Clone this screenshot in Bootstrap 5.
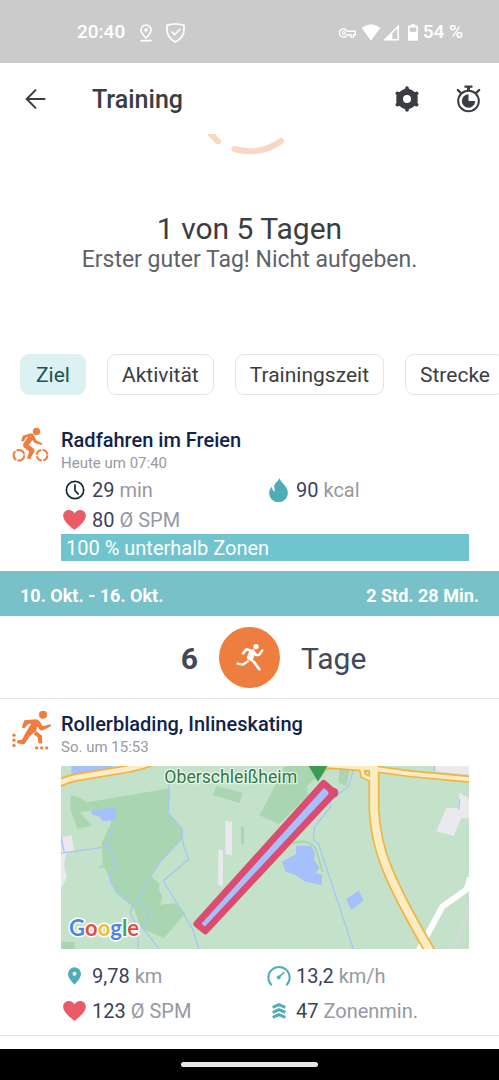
<!DOCTYPE html>
<html lang="de">
<head>
<meta charset="utf-8">
<meta name="viewport" content="width=device-width, initial-scale=1">
<title>Training</title>
<link href="https://cdn.jsdelivr.net/npm/bootstrap@5.3.0/dist/css/bootstrap.min.css" rel="stylesheet">
<style>
  body { font-family: Roboto, "Liberation Sans", sans-serif; color: #3a3d42; background: #fff; }
  svg { display: block; flex: none; }
  .status-bar { background: #cbcbcb; color: #fff; height: 63px; padding: 2px 36px 0 77px; font-size: 19px; font-weight: 500; }
  .status-bar .pin { margin-left: 14px; }
  .status-bar .shield { margin-left: 13px; }
  .status-bar .wifi { margin: 0 2px 0 5px; }
  .status-bar .battery { margin: 0 5px 0 9px; }
  .app-bar { height: 71px; padding: 0 18px 0 25px; }
  .app-bar h1 { font-size: 25px; font-weight: 500; line-height: 30px; margin-left: 45px; padding-top: 3px; }
  .icon-btn { background: none; border: 0; padding: 0; color: #3a3e43; }
  .icon-btn + .icon-btn { margin-left: 36px; }
  .goal-title { font-size: 30px; line-height: 36px; font-weight: 400; margin-top: 56px; }
  .goal-text { font-size: 23px; line-height: 26px; color: #5f6268; }
  .chips { gap: 21px; margin-top: 81px; padding-left: 20px; overflow: hidden; }
  .chip { flex: none; height: 41px; padding: 0 14px; font-size: 21px; line-height: 24px; color: #3a3d42; background: #fff; border: 1px solid #e4e4e4; border-radius: 9px; }
  .chip.active { background: #dcf1f2; border-color: #dcf1f2; color: #1d5358; padding: 0 15px; }
  .workout { padding: 12px 30px 0 0; }
  .chips + .workout { padding-top: 32px; }
  .workout-icon { width: 61px; padding-left: 12px; flex: none; }
  .workout h2 { font-size: 20px; line-height: 26px; font-weight: 500; color: #10234b; }
  .workout time { display: block; font-size: 15px; line-height: 21px; color: #989aa0; }
  .metric { font-size: 20px; color: #3a4358; padding-top: 2px; }
  .metric .unit { color: #96999f; }
  .glyph { width: 27px; margin-right: 4px; flex: none; display: flex; justify-content: center; }
  .tight .metric { height: 30px; }
  .loose .metric { height: 35px; }
  .zone { background: #6fc4cd; color: #fff; font-size: 20px; line-height: 27px; padding: 1px 5px 0; height: 27px; }
  .week { background: #79c1c9; color: #fff; height: 45px; margin-top: 10px; padding: 3px 20px 0; font-size: 18px; font-weight: 700; }
  .days { height: 83px; gap: 21px; font-size: 30px; color: #40495b; border-bottom: 1px solid #e4e4e4; }
  .days > span { flex: 1 1 0; padding-top: 2px; }
  .disc { width: 61px; height: 61px; border-radius: 50%; background: #ee7d40; }
  .map { width: 100%; margin-top: 8px; }
  .rule { border-bottom: 1px solid #e2e2e2; }
  .nav-strip { background: #000; height: 31px; }
  .home-pill { width: 137px; height: 5px; border-radius: 3px; background: #eae6e8; }
</style>
</head>
<body>
<svg width="0" height="0" class="position-absolute" aria-hidden="true">
  <symbol id="heart" viewBox="0 0 68 60"><path fill="#e95b66" d="M34 60C24 51 0 34 0 17 0 7 8 0 17 0c8 0 13 4 17 10C38 4 43 0 51 0c9 0 17 7 17 17 0 17-24 34-34 43z"/></symbol>
</svg>
<div class="d-flex flex-column min-vh-100 overflow-hidden">
  <div class="status-bar d-flex align-items-center">
    <span>20:40</span>
    <svg class="pin" width="14" height="18" viewBox="0 0 40 54" fill="none" stroke="#fff" stroke-width="5"><path d="M20 42C10 32 5 26 5 18a15 15 0 0 1 30 0c0 8-5 14-15 24z"/><circle cx="20" cy="18" r="3"/><path d="M3 50h34"/></svg>
    <svg class="shield" width="19" height="20" viewBox="0 0 57 60" fill="none" stroke="#fff" stroke-width="5"><path d="M3 7q25-8 51 0v14c0 16-10 28-26 36C13 49 3 37 3 21z"/><path d="M17 26l9 9 17-17"/></svg>
    <svg class="ms-auto" width="17" height="12" viewBox="0 0 50 34" fill="none" stroke="#fff" stroke-width="4"><path d="M24 12h24v10h-5v7h-8v-7H24A12 12 0 1 1 24 12z"/><circle cx="14" cy="17" r="4"/></svg>
    <svg class="wifi" width="20" height="17" viewBox="0 0 60 50" fill="#fff"><path d="M2 11q28-22 56 0L30 50z"/></svg>
    <svg width="16" height="17" viewBox="0 0 50 50"><path d="M50 0v50H0z" fill="#fff"/><path d="M45 12v33H29V28z" fill="#cbcbcb"/></svg>
    <svg class="battery" width="10" height="17" viewBox="0 0 30 50"><path d="M9 0h12v4h6q3 0 3 3v40q0 3-3 3H3q-3 0-3-3V7q0-3 3-3h6z" fill="#fff"/><path d="M5 10h20v13H5z" fill="#cbcbcb"/></svg>
    <span>54 %</span>
  </div>

  <header class="app-bar d-flex align-items-center">
    <button class="icon-btn" aria-label="Zurück"><svg width="22" height="22" viewBox="0 0 66 66" fill="none" stroke="currentColor" stroke-width="6"><path d="M61 33H6M33 5L5 33l28 28"/></svg></button>
    <h1 class="mb-0 me-auto">Training</h1>
    <button class="icon-btn" aria-label="Einstellungen"><svg width="26" height="26" viewBox="0 0 78 78"><path d="M39 6l14 6 16 11 2 9v14l-2 9-16 11-14 6-14-6L9 55l-2-9V32l2-9 16-11z" fill="currentColor"/><path d="M39 6v66M10 22l58 34M68 22L10 56" stroke="currentColor" stroke-width="11" stroke-linecap="round"/><circle cx="39" cy="39" r="12" fill="#fff"/></svg></button>
    <button class="icon-btn" aria-label="Stoppuhr"><svg width="25" height="28" viewBox="0 0 74 84" fill="none" stroke="currentColor"><circle cx="37" cy="48" r="31" stroke-width="6"/><path d="M37 3v12" stroke-width="9"/><path d="M28 5h18" stroke-width="7" stroke-linecap="round"/><path d="M5 15l8 8M69 15l-8 8" stroke-width="7" stroke-linecap="round"/><path d="M37 28v20h20A20 20 0 1 1 37 28z" fill="currentColor" stroke="none"/></svg></button>
  </header>

  <main>
    <section class="text-center">
      <svg class="mx-auto" width="84" height="21" viewBox="0 0 252 63" fill="none" stroke="#f9d7c4" stroke-width="18" stroke-linecap="round"><path d="M-4-12L30 22M79 45Q158 66 219 21"/></svg>
      <h2 class="goal-title mb-0">1 von 5 Tagen</h2>
      <p class="goal-text mb-0">Erster guter Tag! Nicht aufgeben.</p>
    </section>

    <div class="chips d-flex">
      <button class="chip active">Ziel</button>
      <button class="chip">Aktivität</button>
      <button class="chip">Trainingszeit</button>
      <button class="chip">Strecke</button>
    </div>

    <article class="workout d-flex">
      <div class="workout-icon"><svg width="37" height="36" viewBox="36 24 112 108" fill="#ee7d40"><circle cx="110" cy="37" r="11"/><path d="M91 43q7-2 10 4l9 17 16 8q4 4-1 6l-20-6-7-9-11 15 15 11q4 4 1 10l-12 21q-7 2-9-3l6-19-17-14q-4-4 0-11l14-20-7 2-6 11q-6 3-8-2l5-14z"/><g fill="none" stroke="#ee7d40" stroke-width="6"><circle cx="57" cy="109" r="16" stroke-dasharray="29 4"/><circle cx="127" cy="109" r="16" stroke-dasharray="21 4"/></g></svg></div>
      <div class="flex-grow-1">
        <h2 class="mb-0">Radfahren im Freien</h2>
        <time>Heute um 07:40</time>
        <div class="row row-cols-2 g-0 tight">
          <div class="col metric d-flex align-items-center"><span class="glyph"><svg width="20" height="20" viewBox="0 0 60 60" fill="none" stroke="#12262e" stroke-width="5"><circle cx="30" cy="30" r="26"/><path d="M30 13v19l11 11"/></svg></span><span>29 <span class="unit">min</span></span></div>
          <div class="col metric d-flex align-items-center"><span class="glyph"><svg width="19" height="24" viewBox="0 0 56 72"><path fill="#50adb8" d="M31 0c2 13 25 24 25 44 0 16-12 28-28 28S0 60 0 44c0-8 3-13 8-18 1 8 4 11 7 15 4-3 0-9 0-14C15 15 27 11 31 0z"/></svg></span><span>90 <span class="unit">kcal</span></span></div>
          <div class="col metric d-flex align-items-center"><span class="glyph"><svg width="23" height="20"><use href="#heart"/></svg></span><span>80 <span class="unit">Ø SPM</span></span></div>
        </div>
        <div class="zone">100 % unterhalb Zonen</div>
      </div>
    </article>

    <div class="week d-flex justify-content-between align-items-center"><span>10. Okt. - 16. Okt.</span><span>2 Std. 28 Min.</span></div>

    <div class="days d-flex align-items-center">
      <span class="text-end fw-bold">6</span>
      <div class="disc d-flex align-items-center justify-content-center"><svg width="28" height="28" viewBox="257 99 84 84" fill="none" stroke="#fff" stroke-linecap="round" stroke-linejoin="round"><circle cx="317" cy="110" r="8" fill="#fff" stroke="none"/><path d="M278 130l10-12 15 4-9 22 16 11 17 23" stroke-width="8"/><path d="M308 121l9 14 9 0 10-14M262 161l16 3 14-10" stroke-width="7"/><path d="M300 122l11 11-6 16-13-6z" fill="#fff" stroke-width="5"/></svg></div>
      <span>Tage</span>
    </div>

    <article class="workout d-flex">
      <div class="workout-icon"><svg width="40" height="41" viewBox="35 27 120 122" fill="#ee7d40"><circle cx="128" cy="38" r="12"/><path d="M72 54l35-3q9 2 12 8l8 13 22-6q5 2 2 7l-25 12q-6 1-9-4l-6-8-10 18-15 14-12 19q-2 3-6 2l-17-3q-4-5 1-9l13-1 12-23 16-26-10 2-11 13q-7 0-7-6z"/><path d="M106 86l19 15 1 23h-11l-3-19-12-9z"/><path d="M90 70l22-8-4 24-20 12z"/><circle cx="41" cy="99" r="5"/><circle cx="41" cy="114" r="5"/><circle cx="41" cy="130" r="5"/><circle cx="109" cy="137" r="5"/><circle cx="124" cy="137" r="5"/><circle cx="139" cy="137" r="5"/></svg></div>
      <div class="flex-grow-1">
        <h2 class="mb-0">Rollerblading, Inlineskating</h2>
        <time>So. um 15:53</time>
        <svg class="map" viewBox="0 0 1224 549" role="img" aria-label="Karte der Strecke bei Oberschleißheim">
          <path fill="#c4e2ca" d="M0 0h1224v549H0z"/>
          <g transform="translate(-33 -18)">
            <g fill="#a9d6b1">
              <path d="M62 105l20 5 30 17 115-20 133-22-3 75 42 48 0 25-70 72-29 42 28 24q-4 22 10 38l-8 25 45-4 31 30-64 74-70-30-20-60-54-45-40-90-3-60 28-60 8-46-102 14 38 40-44 9-22-57z"/>
              <path d="M500 78l79 20-11 31-80-24zM660 120l-32 45 32 16zM573 200h9v53h-9zM33 545h40v25H33zM140 322l55-20v25z"/>
            </g>
            <path fill="#a5c0fb" d="M64 18h124l-3 20-58 9-62 11zM123 152l76-11-3 40-36 3-14-15-20-5z"/>
            <g fill="#ece9ee"><path d="M526 183l20 3v100l-20-5zM506 268l13 4-1 106-14-4zM38 230l26-5 9 47-40 8zM33 275h17l-8 40 9 35-12 26-6 8z"/></g>
            <g fill="none" stroke="#a5c7f2" stroke-width="4"><path d="M358 60l-3 100 42 46v28l-67 72-45 72-22 43 34 42-20 40 52 65M397 234l5 28 14 36-76 65 88 145 19 60M197 204l-15 10-7 46 26 60-20 20v25l25 37 45 27-10 30 23 50v60M30 280l145-20M33 230l10 48"/></g>
            <path fill="none" stroke="#efb443" stroke-width="25" d="M20 73q40-20 85-25l110-18q60-10 100-28"/><path fill="none" stroke="#fdecc2" stroke-width="15" d="M20 73q40-20 85-25l110-18q60-10 100-28"/>
          </g>
          <g transform="translate(597 -18)">
            <path fill="#a9d6b1" d="M75 18h195l-10 60-24-10 2-45-40 10-50 70-92 90L1 163z"/><path fill="#c4e2ca" d="M140 80q40-50 80-5l-10 60-60-10z"/>
            <path fill="#ece9ee" d="M526 18h105v26l-105-10zM598 98l33 20v57h-28l-22 53-52-14 30-70 35-1z"/>
            <path fill="none" stroke="#a9d6b1" stroke-width="6" d="M95 250q60-18 75 25l18 60"/>
            <path fill="#a5c0fb" d="M108 258l45-1 12 22-3 20 17 24-12 16 20 6-2 30-48-10-35-22-24-7-13-31 43-22zM258 418l38-27 15 31-37 28z"/>
            <path fill="none" stroke="#a5c7f2" stroke-width="4" d="M280 30l-15 50-54 42v20l-48 60-3 38 15 10 106 320M523 18v16M599 117l-3 32"/>
            <path fill="none" stroke="#fff" stroke-width="18" d="M472 580l75-140 68-48q10-8 15-40"/><path fill="none" stroke="#d4dbd7" stroke-width="8" d="M583 570l48-145"/>
            <g fill="none" stroke="#efb443"><path stroke-width="22" d="M150 12l180 13 120 16 180 17"/><path stroke-width="18" d="M305 25l5 22 25 12"/><path stroke-width="33" d="M342 0v150q5 90 37 170 40 100 138 265"/></g>
            <g fill="none" stroke="#fdecc2"><path stroke-width="12" d="M150 12l180 13 120 16 180 17"/><path stroke-width="9" d="M305 25l5 22 25 12"/><path stroke-width="23" d="M342 0v150q5 90 37 170 40 100 138 265"/></g>
            <path fill="#3d9a54" d="M146 18h56l-28 47z"/>
          </g>
          <path fill="#a5c0fb" stroke="#dc4c70" stroke-width="20" stroke-linejoin="round" d="M407 474L788 52l32 28L433 495z"/><circle cx="817" cy="80" r="15" fill="#dc4c70"/>
          <text x="310" y="50" font-family="Roboto, sans-serif" font-size="53" fill="#2f7a3c" stroke="#fff" stroke-opacity=".7" stroke-width="8" stroke-linejoin="round" paint-order="stroke">Oberschleißheim</text>
          <text x="24" y="509" font-family="Lato, sans-serif" font-weight="700" font-size="66" stroke="#fff" stroke-width="9" stroke-linejoin="round" paint-order="stroke"><tspan fill="#4a86ee">G</tspan><tspan fill="#df5043">o</tspan><tspan fill="#f2bb35">o</tspan><tspan fill="#4a86ee">g</tspan><tspan fill="#43a75a">l</tspan><tspan fill="#df5043">e</tspan></text>
        </svg>
        <div class="row row-cols-2 g-0 loose pt-2">
          <div class="col metric d-flex align-items-center"><span class="glyph"><svg width="13" height="18" viewBox="0 0 40 54"><path fill="#50adb8" d="M20 54C8 40 0 31 0 20a20 20 0 0 1 40 0c0 11-8 20-20 34z"/><circle cx="20" cy="20" r="6" fill="#fff"/></svg></span><span>9,78 <span class="unit">km</span></span></div>
          <div class="col metric d-flex align-items-center"><span class="glyph"><svg width="24" height="22" viewBox="0 0 72 66" fill="none" stroke="#50adb8" stroke-width="6"><path d="M14 61A32 32 0 1 1 58 61"/><path d="M36 36l16-15" stroke-width="5"/><circle cx="35" cy="37" r="5" fill="#50adb8" stroke-width="2"/></svg></span><span>13,2 <span class="unit">km/h</span></span></div>
          <div class="col metric d-flex align-items-center"><span class="glyph"><svg width="23" height="20"><use href="#heart"/></svg></span><span>123 <span class="unit">Ø SPM</span></span></div>
          <div class="col metric d-flex align-items-center"><span class="glyph"><svg width="14" height="16" viewBox="0 0 42 48" fill="none" stroke="#50adb8" stroke-width="9"><path d="M2 13l19-8 19 8M2 28l19-8 19 8M2 43l19-8 19 8"/></svg></span><span>47 <span class="unit">Zonenmin.</span></span></div>
        </div>
      </div>
    </article>
    <div class="rule pt-2"></div>
  </main>

  <footer class="nav-strip mt-auto d-flex align-items-center justify-content-center"><div class="home-pill"></div></footer>
</div>
<script src="https://cdn.jsdelivr.net/npm/bootstrap@5.3.0/dist/js/bootstrap.bundle.min.js"></script>
</body>
</html>
